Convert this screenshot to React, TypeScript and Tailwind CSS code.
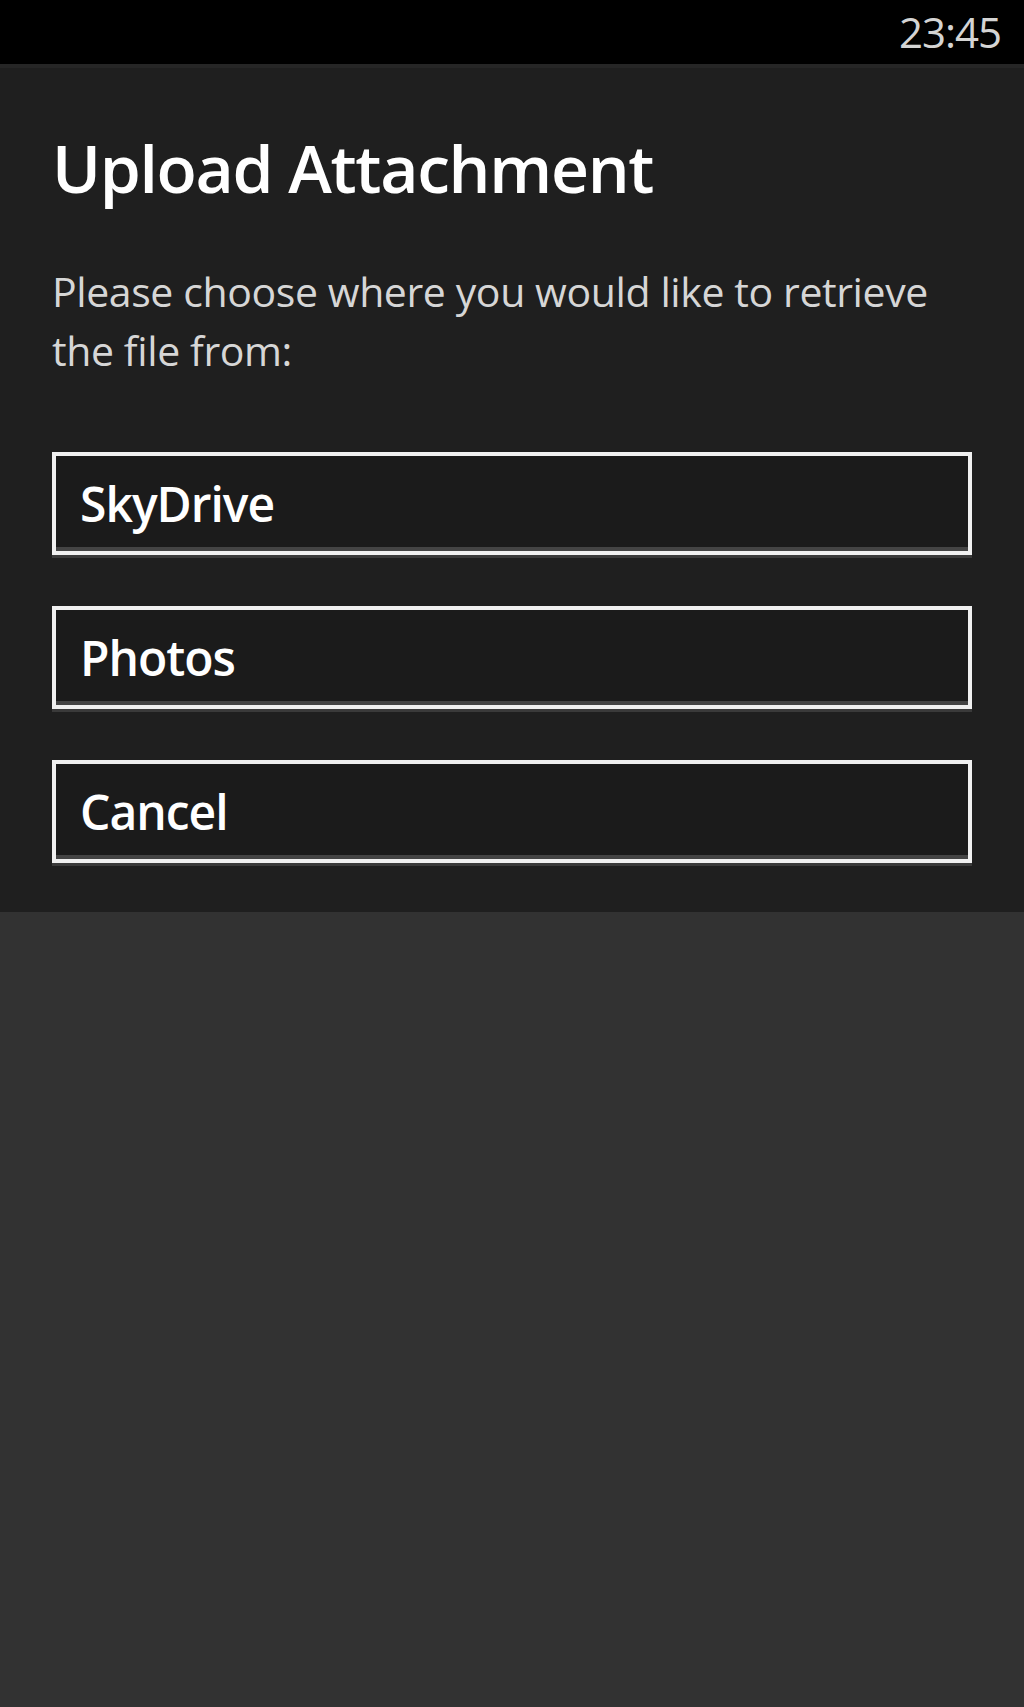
export default function App() {
  const options = ["SkyDrive", "Photos", "Cancel"];

  return (
    <div
      className="w-[1024px] h-[1707px] bg-[#323232] flex flex-col"
      style={{ fontFamily: '"Open Sans", "Noto Sans", sans-serif' }}
    >
      {/* status bar */}
      <div className="h-[64px] bg-black flex items-center justify-end pr-[23px] shrink-0">
        <span className="text-[42px] leading-none text-[#d4d4d4] tracking-[-1px]">23:45</span>
      </div>

      {/* dialog */}
      <div className="bg-[#1f1f1f] border-t-[4px] border-[#262626] px-[52px] pt-[59px] pb-[49px] flex flex-col">
        <h1 className="text-[66px] leading-[80px] text-white tracking-[-1.3px] font-semibold">
          Upload Attachment
        </h1>
        <p className="mt-[55px] text-[41px] leading-[59px] text-[#d6d6d6] tracking-[-0.4px]">
          Please choose where you would like to retrieve
          <br />
          the file from:
        </p>

        <div className="mt-[72px] flex flex-col gap-[51px]">
          {options.map((o) => (
            <button
              key={o}
              className="h-[103px] w-full border-[4px] border-[#f0f0f0] bg-[#1b1b1b] shadow-[inset_0_-4px_0_#444,0_3px_0_#3a3a3a] flex items-center pl-[24px] text-left"
            >
              <span className="text-[48px] text-white font-semibold tracking-[-1px]">{o}</span>
            </button>
          ))}
        </div>
      </div>
    </div>
  );
}
